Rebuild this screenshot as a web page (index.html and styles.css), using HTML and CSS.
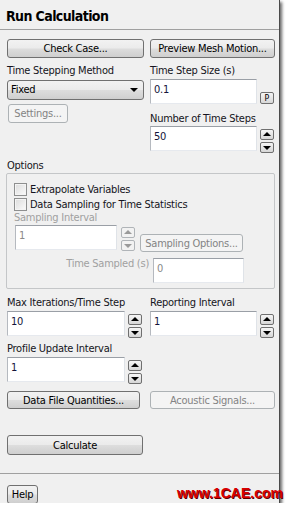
FILE: index.html
```html
<!DOCTYPE html>
<html lang="en">

<head>
    <meta charset="UTF-8">
    <meta name="viewport" content="width=device-width, initial-scale=1.0">
    <title>Run Calculation</title>
    <link rel="stylesheet" href="styles.css">
</head>

<body>
    <div class="panel">
        <div class="title">Run Calculation</div>

        <div class="content">
            <div class="cols top-buttons">
                <button class="btn">Check Case...</button>
                <button class="btn">Preview Mesh Motion...</button>
            </div>

            <div class="cols step-row">
                <div class="col">
                    <span class="lbl">Time Stepping Method</span>
                    <div class="select">Fixed<span class="caret"></span></div>
                    <button class="btn disabled settings">Settings...</button>
                </div>
                <div class="col">
                    <span class="lbl">Time Step Size (s)</span>
                    <div class="field">
                        <div class="input w-right">0.1</div>
                        <button class="pbtn">P</button>
                    </div>
                    <span class="lbl lbl-steps">Number of Time Steps</span>
                    <div class="field field-steps">
                        <div class="input w-right">50</div>
                        <div class="spin">
                            <button class="spin-btn"><span class="tri up"></span></button>
                            <button class="spin-btn"><span class="tri down"></span></button>
                        </div>
                    </div>
                </div>
            </div>

            <span class="lbl options-lbl">Options</span>
            <div class="group">
                <div class="checks">
                    <label class="check"><span class="box"></span>Extrapolate Variables</label>
                    <label class="check"><span class="box"></span>Data Sampling for Time Statistics</label>
                </div>
                <span class="lbl muted">Sampling Interval</span>
                <div class="field sampling">
                    <div class="input w-sampling muted">1</div>
                    <div class="spin">
                        <button class="spin-btn off"><span class="tri up"></span></button>
                        <button class="spin-btn off"><span class="tri down"></span></button>
                    </div>
                    <button class="btn disabled sampling-opts">Sampling Options...</button>
                </div>
                <div class="field sampled">
                    <span class="sampled-lbl muted">Time Sampled (s)</span>
                    <div class="input w-sampled muted">0</div>
                </div>
            </div>

            <div class="cols iter-row">
                <div class="col">
                    <span class="lbl">Max Iterations/Time Step</span>
                    <div class="field field-num">
                        <div class="input w-left">10</div>
                        <div class="spin">
                            <button class="spin-btn"><span class="tri up"></span></button>
                            <button class="spin-btn"><span class="tri down"></span></button>
                        </div>
                    </div>
                </div>
                <div class="col">
                    <span class="lbl">Reporting Interval</span>
                    <div class="field field-num">
                        <div class="input w-right">1</div>
                        <div class="spin">
                            <button class="spin-btn"><span class="tri up"></span></button>
                            <button class="spin-btn"><span class="tri down"></span></button>
                        </div>
                    </div>
                </div>
            </div>

            <div class="cols profile-row">
                <div class="col">
                    <span class="lbl">Profile Update Interval</span>
                    <div class="field field-num">
                        <div class="input w-left">1</div>
                        <div class="spin">
                            <button class="spin-btn"><span class="tri up"></span></button>
                            <button class="spin-btn"><span class="tri down"></span></button>
                        </div>
                    </div>
                </div>
            </div>

            <div class="cols bottom-buttons">
                <button class="btn data-btn">Data File Quantities...</button>
                <button class="btn disabled">Acoustic Signals...</button>
            </div>

            <button class="btn calc-btn">Calculate</button>

            <div class="separator"></div>

            <button class="btn help-btn">Help</button>
        </div>

        <div class="watermark">www.1CAE.com</div>
    </div>
</body>

</html>
```

FILE: styles.css
```css
body {
    margin: 0;
    background-color: #fff;
    font-family: "DejaVu Sans Condensed", "DejaVu Sans", sans-serif;
    font-stretch: condensed;
    font-size: 11px;
    letter-spacing: -0.25px;
    color: #141420;
}

.panel {
    position: relative;
    width: 279px;
    height: 503px;
    background-color: #f0f0f0;
    border-right: 1px solid #4a4a4a;
    box-shadow: 2px 2px 3px rgba(0, 0, 0, 0.6);
    overflow: visible;
}

.title {
    height: 29px;
    border-bottom: 1px solid #a0a0a0;
    padding-left: 6px;
    font-size: 14px;
    font-weight: bold;
    letter-spacing: -0.6px;
    line-height: 32px;
    color: #000;
}

.content {
    padding: 0 4px 0 7px;
}

.cols {
    display: grid;
    grid-template-columns: 137px 125px;
    column-gap: 6px;
}

.col {
    display: flex;
    flex-direction: column;
    align-items: flex-start;
}

.lbl {
    display: block;
    height: 13px;
    line-height: 13px;
    white-space: nowrap;
}

.muted {
    color: #a0a0a0;
}

/* buttons */
.btn {
    display: block;
    height: 19px;
    padding: 0;
    margin: 0;
    border: 1px solid #707070;
    border-radius: 3px;
    background: linear-gradient(#f2f2f2, #ebebeb 48%, #dddddd 52%, #cfcfcf);
    font-family: inherit;
    font-stretch: condensed;
    font-size: 11px;
    letter-spacing: -0.25px;
    color: #000;
    white-space: nowrap;
}

.btn.disabled {
    border-color: #adb2b5;
    background: #f4f4f4;
    color: #838383;
}

.top-buttons {
    margin-top: 9px;
}

.step-row {
    margin-top: 6px;
}

.select {
    position: relative;
    box-sizing: border-box;
    width: 137px;
    height: 20px;
    margin-top: 3px;
    padding-left: 3px;
    border: 1px solid #707070;
    border-radius: 3px;
    background: linear-gradient(#f2f2f2, #ebebeb 48%, #dddddd 52%, #cfcfcf);
    line-height: 17px;
    color: #000;
}

.caret {
    position: absolute;
    right: 5px;
    top: 7px;
    border-left: 4px solid transparent;
    border-right: 4px solid transparent;
    border-top: 4px solid #000;
}

.settings {
    width: 60px;
    margin-left: 1px;
    margin-top: 4px;
}

.field {
    display: flex;
    align-items: flex-start;
    gap: 3px;
    margin-top: 2px;
}

.input {
    box-sizing: border-box;
    height: 25px;
    padding: 3px 0 0 3px;
    border: 1px solid;
    border-color: #9a9fa6 #dfe3e8 #e6e9ee #b5b9bf;
    background-color: #fff;
    line-height: 13px;
    color: #14143a;
}

.w-right {
    width: 107px;
}

.w-left {
    width: 118px;
}

.w-sampling {
    width: 102px;
    margin-left: 1px;
}

.w-sampled {
    width: 91px;
}

.input.muted {
    color: #8a8a8a;
}

.pbtn {
    width: 14px;
    height: 12px;
    margin-top: 13px;
    padding: 0;
    border: 1px solid #707070;
    border-radius: 2px;
    background: linear-gradient(#f4f4f4, #d8d8d8);
    font-family: "DejaVu Sans Mono", monospace;
    font-size: 8px;
    line-height: 9px;
    color: #000;
}

.lbl-steps {
    margin-top: 8px;
}

.field-steps {
    margin-top: 1px;
}

.spin {
    display: flex;
    flex-direction: column;
    gap: 2px;
    margin-top: 3px;
}

.spin-btn {
    position: relative;
    width: 14px;
    height: 11px;
    padding: 0;
    border: 1px solid #6f6f6f;
    border-radius: 2px;
    background: linear-gradient(#f6f6f6, #d6d6d6);
}

.spin-btn.off {
    border-color: #b0b4b8;
    background: #f2f2f2;
}

.tri {
    position: absolute;
    left: 2px;
    top: 2px;
    border-left: 4px solid transparent;
    border-right: 4px solid transparent;
}

.tri.up {
    border-bottom: 4px solid #000;
}

.tri.down {
    top: 3px;
    border-top: 4px solid #000;
}

.spin-btn.off .tri.up {
    border-bottom-color: #9a9a9a;
}

.spin-btn.off .tri.down {
    border-top-color: #9a9a9a;
}

/* options group */
.options-lbl {
    margin-top: 6px;
}

.group {
    box-sizing: border-box;
    width: 269px;
    height: 116px;
    margin: 1px 0 0 -1px;
    padding: 9px 0 0 7px;
    border: 1px solid #c4c6c8;
    border-radius: 2px;
}

.checks {
    display: flex;
    flex-direction: column;
    gap: 2px;
}

.check {
    display: flex;
    align-items: center;
    gap: 3px;
    height: 13px;
    white-space: nowrap;
}

.box {
    box-sizing: border-box;
    width: 13px;
    height: 13px;
    border: 1px solid #8e8f8f;
    background: linear-gradient(135deg, #dcdcdc, #fbfbfb);
    box-shadow: inset 0 0 0 1px #f4f4f4;
}

.sampling {
    margin-top: 1px;
    gap: 4px;
}

.sampling .spin {
    margin-top: 2px;
}

.sampling-opts {
    width: 103px;
    height: 18px;
    margin-top: 9px;
    margin-left: 1px;
}

.sampled {
    gap: 0;
    margin-top: 6px;
}

.sampled-lbl {
    box-sizing: border-box;
    width: 139px;
    margin-top: -1px;
    padding-right: 4px;
    text-align: right;
    white-space: nowrap;
}

/* numeric rows */
.iter-row {
    margin-top: 7px;
}

.profile-row {
    margin-top: 4px;
}

.field-num {
    margin-top: 2px;
}

.bottom-buttons {
    margin-top: 7px;
}

.bottom-buttons .btn {
    height: 18px;
}

.data-btn {
    width: 133px;
}

.calc-btn {
    width: 136px;
    height: 20px;
    margin-top: 26px;
}

.separator {
    height: 1px;
    margin: 18px -4px 0 -7px;
    background-color: #a0a0a0;
}

.help-btn {
    width: 31px;
    margin-top: 11px;
}

.watermark {
    position: absolute;
    right: -4px;
    bottom: 2px;
    font-family: "Liberation Sans", Arial, sans-serif;
    font-size: 14px;
    font-weight: bold;
    letter-spacing: 0;
    color: #d80000;
    text-shadow: 1px 1px 0 #5a0000;
    white-space: nowrap;
}
```
